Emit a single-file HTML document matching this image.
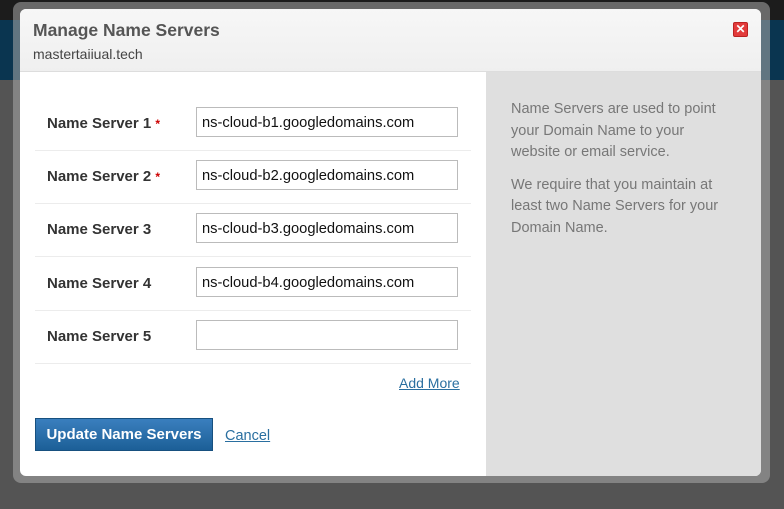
<!DOCTYPE html>
<html><head><style>
*{box-sizing:border-box;margin:0;padding:0}
body{width:784px;height:509px;overflow:hidden;background:#545454;font-family:"Liberation Sans",Arial,sans-serif;position:relative}
.top{position:absolute;left:0;top:0;width:784px;height:20px;background:#1c1c1c}
.band{position:absolute;left:0;top:20px;width:784px;height:60px;background:#0a3550}
.frame{position:absolute;left:13px;top:2px;width:757px;height:481px;background:rgba(170,170,170,0.55);border-radius:8px}
.modal{position:absolute;left:20px;top:9px;width:741px;height:467px;background:#fff;border-radius:6px;overflow:hidden}
.hdr{height:63px;background:linear-gradient(#f7f7f7,#efefef);border-bottom:1px solid #ddd;padding:10px 13px}
.hdr h1{font-size:17.5px;color:#555;font-weight:bold;line-height:22px}
.hdr p{font-size:14px;color:#444;margin-top:5px}
.close{position:absolute;left:713px;top:13px;width:15px;height:15px;background:#e23b3b;border:1px solid #b22;border-radius:2px;color:#fff;font-size:12px;line-height:13px;text-align:center;font-weight:bold}
.right{position:absolute;left:466px;top:63px;width:275px;height:404px;background:#dfdfdf;padding:27px 30px 0 25px;color:#777;font-size:14.5px;line-height:21.5px}
.right p+p{margin-top:11px}
.row{position:absolute;left:15px;width:436px;height:53px;border-bottom:1px solid #ececec}
.row label{position:absolute;left:12px;top:17px;font-size:15px;font-weight:bold;color:#333}
.row label span{color:#c00;font-size:12px}
.row .in{position:absolute;left:161px;top:9px;width:262px;height:30px;border:1px solid #bbb;font-size:14.7px;color:#111;padding:7px 5px 0}
.add{position:absolute;left:379px;top:366px;font-size:14px;color:#2a6fa0;text-decoration:underline}
.btn{position:absolute;left:15px;top:409px;width:178px;height:33px;background:linear-gradient(#3a7fbe,#1c5f97);border:1px solid #17507f;color:#fff;font-weight:bold;font-size:15px;text-align:center;line-height:32px}
.cancel{position:absolute;left:205px;top:419px;font-size:14.5px;color:#2a6fa0;text-decoration:underline}
</style></head><body>
<div class="top"></div><div class="band"></div>
<div class="frame"></div>
<div class="modal">
<div class="hdr"><h1>Manage Name Servers</h1><p>mastertaiiual.tech</p></div>
<div class="close">✕</div>
<div class="row" style="top:89px"><label>Name Server 1 <span>*</span></label><div class="in">ns-cloud-b1.googledomains.com</div></div>
<div class="row" style="top:142px"><label>Name Server 2 <span>*</span></label><div class="in">ns-cloud-b2.googledomains.com</div></div>
<div class="row" style="top:195px"><label>Name Server 3</label><div class="in">ns-cloud-b3.googledomains.com</div></div>
<div class="row" style="top:249px"><label>Name Server 4</label><div class="in">ns-cloud-b4.googledomains.com</div></div>
<div class="row" style="top:302px"><label>Name Server 5</label><div class="in"></div></div>
<div class="add">Add More</div>
<div class="btn">Update Name Servers</div>
<div class="cancel">Cancel</div>
<div class="right"><p>Name Servers are used to point your Domain Name to your website or email service.</p><p>We require that you maintain at least two Name Servers for your Domain Name.</p></div>
</div>
</body></html>
